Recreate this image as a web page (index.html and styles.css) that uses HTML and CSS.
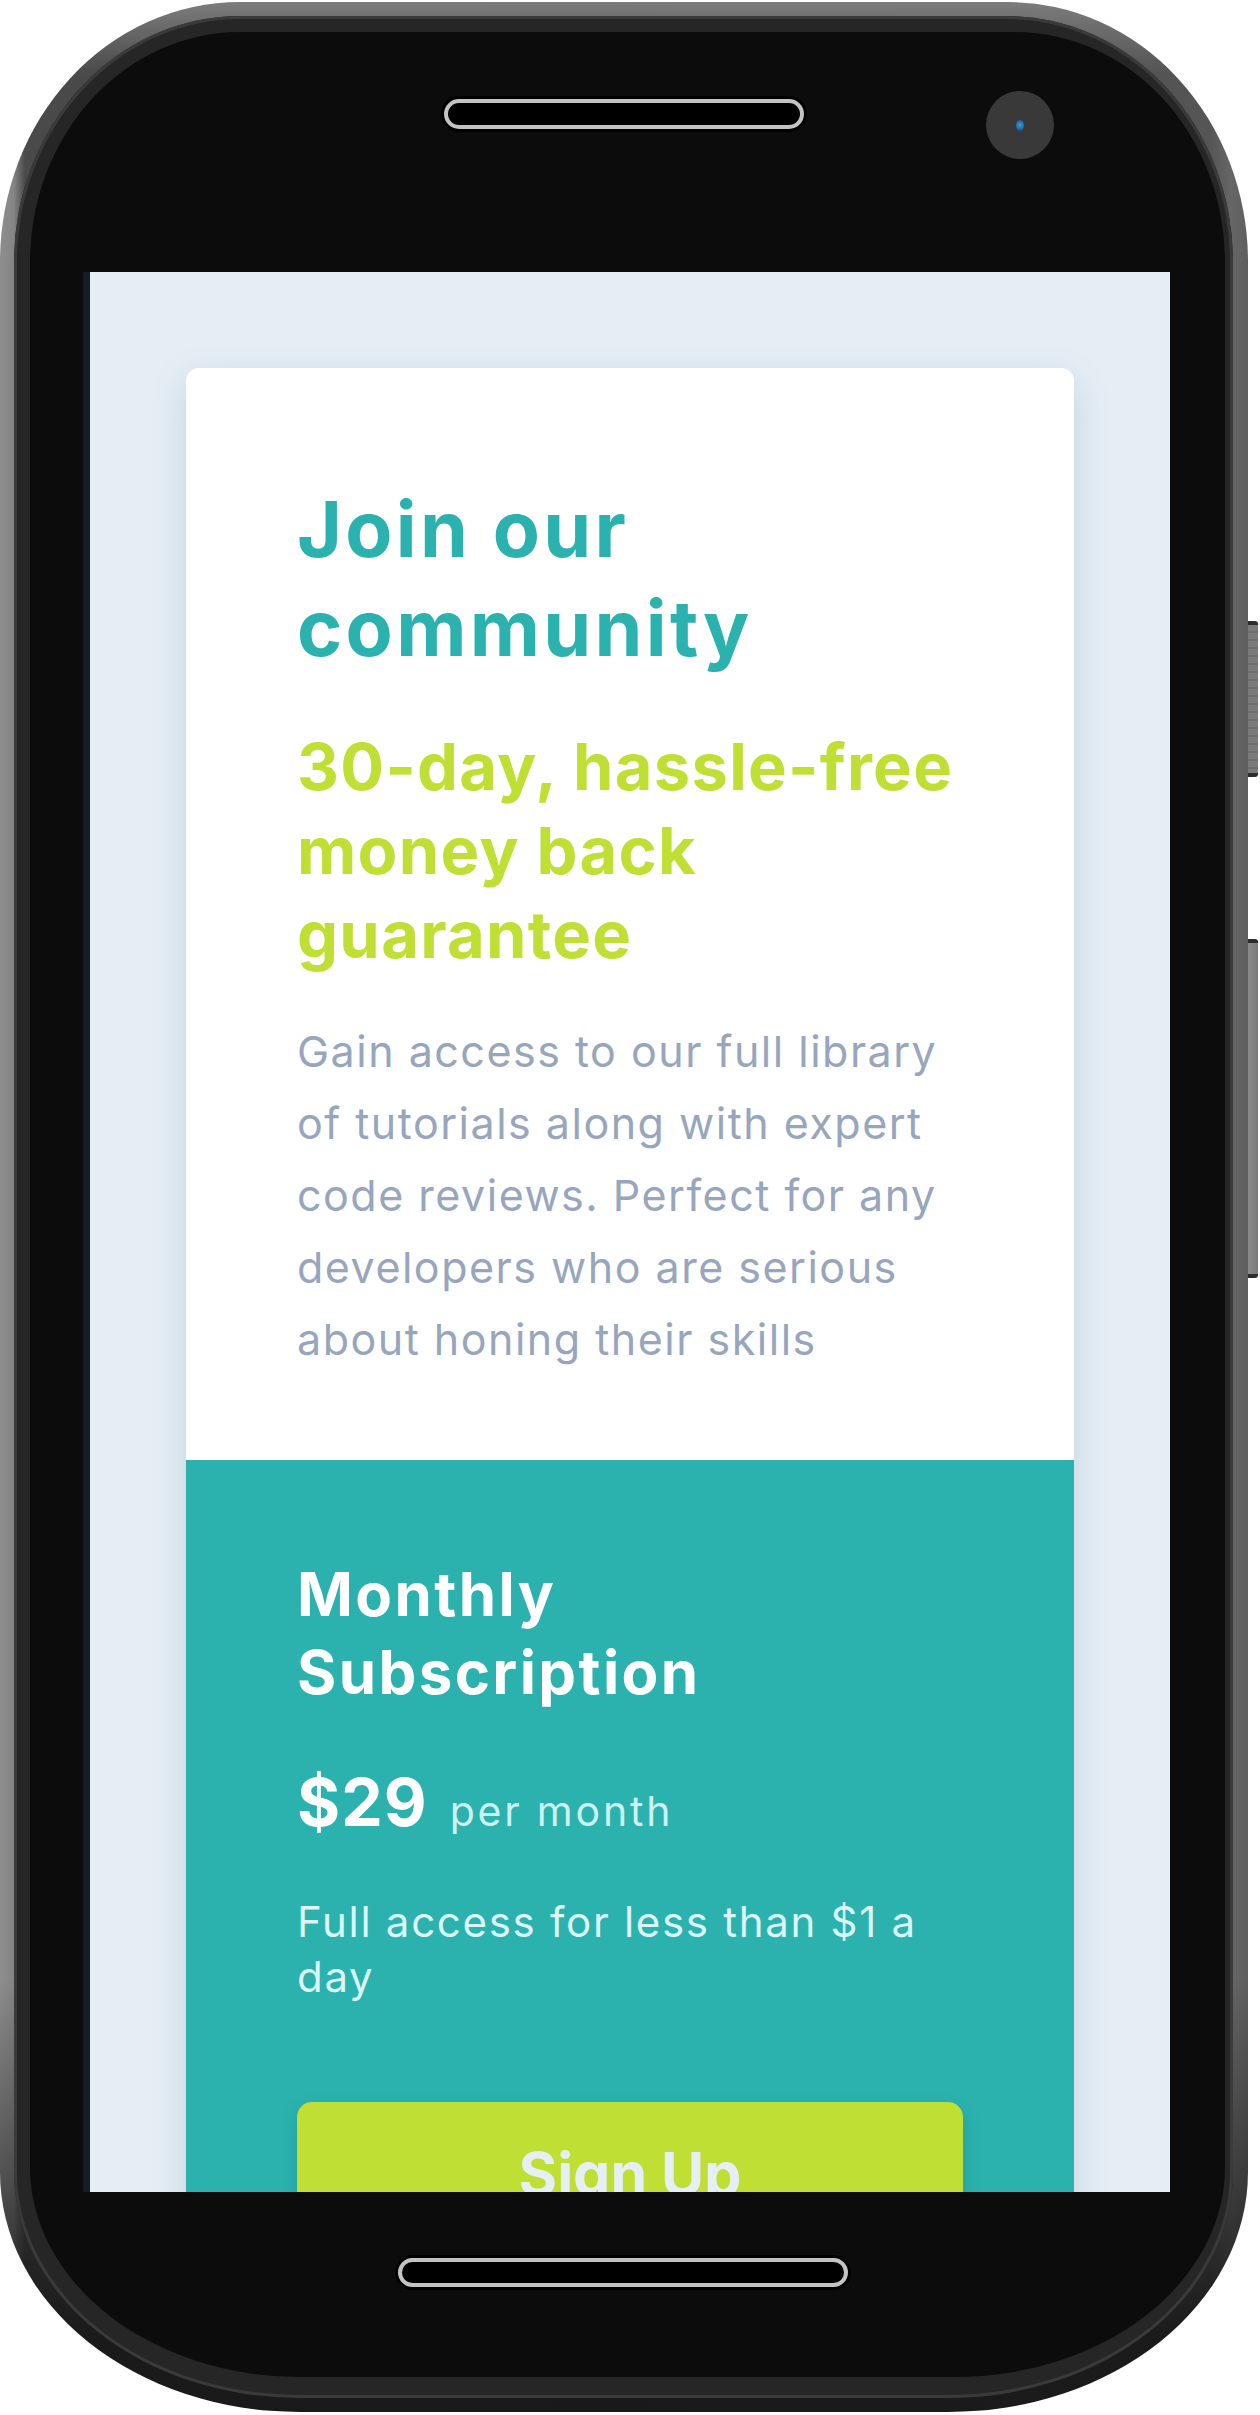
FILE: index.html
```html
<!DOCTYPE html>
<html lang="en">
<head>
<meta charset="utf-8">
<title>Single price grid component</title>
<link rel="stylesheet" href="styles.css">
</head>
<body>
<div class="device">
  <div class="phone">
    <div class="rim">
      <div class="bezel">
        <div class="top-bar">
          <div class="speaker"></div>
          <div class="camera"><div class="lens"></div></div>
        </div>
        <div class="screen">
          <div class="card">
            <section class="intro">
              <h1 class="title">Join our community</h1>
              <h2 class="tagline">30-day, hassle-free money back guarantee</h2>
              <p class="desc">Gain access to our full library of tutorials along with expert code reviews. Perfect for any developers who are serious about honing their skills</p>
            </section>
            <section class="sub">
              <h3 class="sub-title">Monthly Subscription</h3>
              <div class="price"><span class="amount">$29</span><span class="per">per month</span></div>
              <p class="sub-desc">Full access for less than $1 a day</p>
              <button class="signup" type="button">Sign Up</button>
            </section>
          </div>
        </div>
        <div class="bottom-bar"><div class="home"></div></div>
      </div>
    </div>
  </div>
  <div class="side">
    <div class="btn-vol"></div>
    <div class="btn-power"></div>
  </div>
</div>
</body>
</html>
```
FILE: styles.css
```css
html, body {
  margin: 0;
  padding: 0;
  background: #ffffff;
}

.device {
  display: flex;
  align-items: flex-start;
  padding-top: 2px;
  font-family: Inter, "Noto Sans", "Liberation Sans", sans-serif;
}

.phone {
  width: 1248px;
  height: 2410px;
  box-sizing: border-box;
  padding: 14px 15px 14px 14px;
  border-radius: 240px 240px 300px 300px / 260px 260px 240px 240px;
  background:
    linear-gradient(180deg, rgba(20, 20, 20, 0) 82%, rgba(22, 22, 22, 0.92) 97%),
    linear-gradient(180deg, #7c7c7c 0%, rgba(124, 124, 124, 0) 3%),
    linear-gradient(90deg, #8e8e8e 0%, #858585 1.1%, #4a4a4a 2%, #444 50%, #555 97%, #666 98.6%, #5f5f5f 100%);
}

.rim {
  height: 100%;
  box-sizing: border-box;
  padding: 16px 8px 21px 16px;
  background: #262626;
  border-radius: 226px 226px 286px 286px / 246px 246px 226px 226px;
  box-shadow: inset 0 0 0 3px #3a3a3a;
}

.bezel {
  height: 100%;
  background: #0c0c0c;
  border-radius: 210px 210px 270px 270px / 230px 230px 210px 210px;
  display: flex;
  flex-direction: column;
}

.top-bar {
  height: 240px;
  flex: none;
  display: flex;
  align-items: flex-start;
  padding-left: 414px;
}

.speaker {
  width: 360px;
  height: 30px;
  margin-top: 67px;
  box-sizing: border-box;
  border: 4px solid #c3c3c3;
  border-radius: 15px;
  background: #000;
  box-shadow: 0 0 0 3px #000;
}

.camera {
  width: 68px;
  height: 68px;
  margin-top: 59px;
  margin-left: 182px;
  border-radius: 50%;
  background: #393939;
  display: flex;
  align-items: center;
  justify-content: center;
}

.lens {
  width: 8px;
  height: 11px;
  border-radius: 50%;
  background: radial-gradient(circle at 50% 45%, #3a9be0 0%, #1b5f95 70%, #123a5a 100%);
}

.screen {
  flex: none;
  margin-left: 60px;
  width: 1080px;
  height: 1920px;
  box-sizing: border-box;
  padding: 96px;
  background: #e5eef5;
  overflow: hidden;
  box-shadow: -7px 0 0 #161d26;
}

.card {
  background: #ffffff;
  border-radius: 13px;
  overflow: hidden;
  box-shadow: 0 12px 36px rgba(70, 100, 140, 0.2);
}

.intro {
  padding: 112px 111px 85px;
}

.title {
  margin: 0;
  font-size: 77px;
  line-height: 99px;
  font-weight: 700;
  letter-spacing: 3.3px;
  color: #2bb2af;
}

.tagline {
  margin: 47px 0 0;
  font-size: 65px;
  line-height: 84px;
  font-weight: 700;
  letter-spacing: 1.3px;
  color: #c0df34;
}

.desc {
  margin: 38px 0 0;
  font-size: 43px;
  line-height: 72px;
  font-weight: 400;
  letter-spacing: 1.5px;
  color: #98a6bd;
}

.sub {
  background: #2bb2af;
  padding: 95px 111px 111px;
  color: #ffffff;
}

.sub-title {
  margin: 0;
  font-size: 60px;
  line-height: 78px;
  font-weight: 700;
  letter-spacing: 2.4px;
}

.price {
  margin-top: 51px;
  display: flex;
  align-items: baseline;
  gap: 22px;
}

.amount {
  font-size: 66px;
  line-height: 80px;
  font-weight: 700;
  letter-spacing: 1px;
}

.per {
  font-size: 41px;
  line-height: 60px;
  letter-spacing: 2.8px;
  color: #cdf1ef;
}

.sub-desc {
  margin: 52px 0 0;
  font-size: 42px;
  line-height: 55px;
  letter-spacing: 1.7px;
  color: #ddf5f4;
}

.signup {
  display: block;
  width: 100%;
  margin-top: 98px;
  padding: 32px 0;
  border: 0;
  border-radius: 15px;
  background: #c0df34;
  color: #e6eff5;
  font-family: inherit;
  font-size: 59px;
  line-height: 80px;
  font-weight: 700;
  box-shadow: 0 8px 18px rgba(20, 60, 60, 0.18);
}

.bottom-bar {
  flex: none;
  padding: 66px 0 0 368px;
}

.home {
  width: 450px;
  height: 29px;
  box-sizing: border-box;
  border: 4px solid #c3c3c3;
  border-radius: 15px;
  background: #000;
  box-shadow: 0 0 0 3px #000;
}

.side {
  display: flex;
  flex-direction: column;
  padding-top: 619px;
}

.btn-vol {
  width: 10px;
  height: 156px;
  box-sizing: border-box;
  background: repeating-linear-gradient(180deg, #7a7a7a 0 6px, #6e6e6e 6px 8px);
  border-top: 4px solid #2c2c2c;
  border-bottom: 4px solid #2c2c2c;
  border-radius: 0 3px 3px 0;
}

.btn-power {
  width: 10px;
  height: 339px;
  margin-top: 162px;
  box-sizing: border-box;
  background: linear-gradient(90deg, #8a8a8a, #7a7a7a);
  border-top: 4px solid #2c2c2c;
  border-bottom: 4px solid #2c2c2c;
  border-radius: 0 3px 3px 0;
}
```
